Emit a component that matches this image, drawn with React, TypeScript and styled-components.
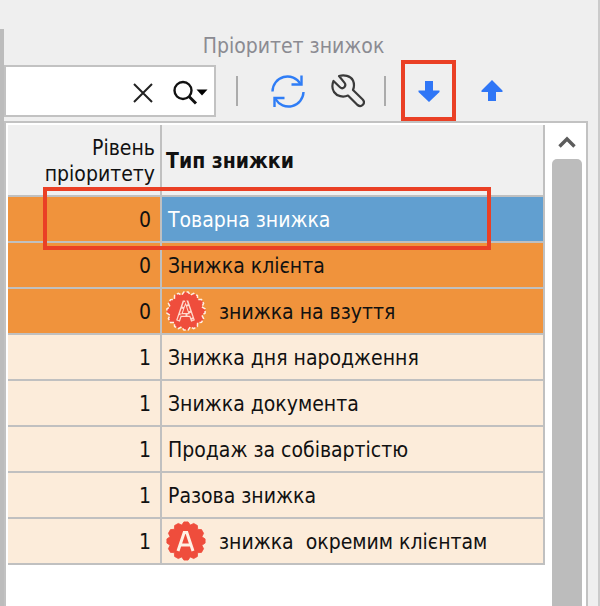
import React from "react";
import styled, { createGlobalStyle } from "styled-components";

const GlobalStyle = createGlobalStyle`
  *, *::before, *::after { box-sizing: border-box; }
  body {
    margin: 0;
    background: #efefef;
    font-family: "DejaVu Sans Condensed", "Noto Sans", sans-serif;
    font-size: 21px;
    line-height: 26px;
    color: #111;
  }
  button { font: inherit; color: inherit; }
`;

const Window = styled.div`
  display: flex;
  min-height: 100vh;
  padding: 29px 10px 0 0;
  border-right: 2px solid #cbcbcb;
`;

const Pane = styled.main`
  flex: 1;
  min-width: 0;
  display: flex;
  flex-direction: column;
  border-left: 4px solid #bcbcbc;
`;

const Title = styled.h1`
  margin: 0;
  padding: 4px 5px 0 0;
  height: 36px;
  font-size: 21px;
  font-weight: 400;
  text-align: center;
  color: #8b8b92;
`;

const Toolbar = styled.div`
  display: flex;
  align-items: flex-start;
  height: 56px;
`;

const SearchBox = styled.div`
  display: flex;
  align-items: center;
  width: 212px;
  height: 52px;
  background: #fff;
  border: 2px solid #c2c2c2;
`;

const SearchInput = styled.input`
  flex: 1;
  min-width: 0;
  height: 100%;
  padding: 0 8px;
  border: 0;
  outline: 0;
  background: transparent;
  font: inherit;
`;

const IconButton = styled.button<{ $width: number }>`
  display: flex;
  align-items: center;
  justify-content: center;
  flex: none;
  width: ${(p) => p.$width}px;
  height: 48px;
  padding: 0;
  border: 0;
  background: transparent;
`;

const SearchActions = styled.div`
  display: flex;
  gap: 6px;
  padding-top: 4px;
`;

const Tools = styled.div`
  display: flex;
  align-items: center;
  height: 52px;
  padding-left: 20px;
`;

const Separator = styled.span`
  width: 2px;
  height: 30px;
  background: #ababab;
`;

const ToolGroup = styled.div`
  display: flex;
  align-items: center;
  gap: 12px;
  padding: 0 12px 0 26px;
`;

const MoveGroup = styled.div`
  display: flex;
  align-items: center;
  padding-left: 15px;
  gap: 8px;
`;

const Marked = styled.div`
  position: relative;
  &::after {
    content: "";
    position: absolute;
    inset: -7px 0 -6px;
    border: 4px solid #ea4025;
    pointer-events: none;
  }
`;

const GridPanel = styled.section`
  flex: 1;
  display: flex;
  background: #fff;
  border: 2px solid #c2c2c2;
  border-bottom: 0;
  padding: 2px 4px 0 2px;
`;

const GridArea = styled.div`
  flex: 1;
  min-width: 0;
`;

const Table = styled.table`
  width: 100%;
  table-layout: fixed;
  border-collapse: separate;
  border-spacing: 0;
`;

const HeadCell = styled.th<{ $numeric?: boolean }>`
  width: ${(p) => (p.$numeric ? "154px" : "auto")};
  height: 72px;
  padding: ${(p) => (p.$numeric ? "2px 5px 0 0" : "2px 4px 0")};
  text-align: ${(p) => (p.$numeric ? "right" : "left")};
  font-weight: ${(p) => (p.$numeric ? 400 : 700)};
  background: #f0f0f0;
  border: solid #c0c0c0;
  border-width: 0 2px 2px 0;
`;

type Tone = "high" | "low";

const Row = styled.tr<{ $tone: Tone }>`
  background: ${(p) => (p.$tone === "high" ? "#f0933c" : "#fcecda")};
`;

const Cell = styled.td<{ $numeric?: boolean; $selected?: boolean }>`
  position: relative;
  height: 46px;
  padding: ${(p) => (p.$numeric ? "2px 9px 0 0" : "0 6px")};
  text-align: ${(p) => (p.$numeric ? "right" : "left")};
  color: ${(p) => (p.$selected ? "#fff" : "inherit")};
  background: ${(p) => (p.$selected ? "#619fd0" : "transparent")};
  border: solid #c0c0c0;
  border-width: 0 2px 2px 0;
`;

const RowMark = styled.span`
  position: absolute;
  z-index: 1;
  top: -10px;
  left: -119px;
  right: 52px;
  height: 63px;
  border: 4px solid #ea4025;
  pointer-events: none;
`;

const CellContent = styled.div`
  display: flex;
  align-items: center;
  gap: 13px;
  white-space: pre;
`;

const Name = styled.span`
  padding-top: 2px;
`;

const BadgeSlot = styled.span`
  display: flex;
  margin-left: -2px;
`;

const ScrollTrack = styled.div`
  flex: none;
  width: 30px;
  margin-left: 7px;
  display: flex;
  flex-direction: column;
`;

const ScrollUp = styled.button`
  display: flex;
  align-items: center;
  justify-content: center;
  height: 34px;
  padding: 0;
  border: 0;
  background: transparent;
`;

const ScrollThumb = styled.div`
  flex: 1;
  background: #bcbcbc;
  border-radius: 5px 5px 0 0;
`;

const badgePoints = Array.from({ length: 12 }, (_, tooth) => {
  const centre = (tooth * Math.PI) / 6;
  return [
    [-0.26, 16.5],
    [-0.11, 19.2],
    [0.11, 19.2],
  ]
    .map(
      ([offset, r]) =>
        `${(20 + r * Math.cos(centre + offset)).toFixed(1)},${(20 + r * Math.sin(centre + offset)).toFixed(1)}`,
    )
    .join(" ");
}).join(" ");

function Badge({ dashed }: { dashed?: boolean }) {
  return (
    <svg width="40" height="40" viewBox="0 0 40 40" aria-hidden="true">
      <polygon
        points={badgePoints}
        fill="#ef4d3c"
        stroke={dashed ? "#fff0e4" : "#ef4d3c"}
        strokeWidth={dashed ? 1.5 : 0.8}
        strokeDasharray={dashed ? "4 2" : undefined}
      />
      <path
        d="M12 30 L18.2 11.5 H20.8 L27 30 M14.5 24 H24.5"
        fill="none"
        stroke={dashed ? "#ffd9cc" : "#fff0e4"}
        strokeWidth={dashed ? 4 : 3}
      />
      {dashed && (
        <path
          d="M12.3 29 L19.5 9 L26.7 29 M14.5 24 H24.5"
          fill="none"
          stroke="#ef4d3c"
          strokeWidth="1.6"
          strokeDasharray="5 2"
        />
      )}
    </svg>
  );
}

function CloseIcon() {
  return (
    <svg width="20" height="20" viewBox="0 0 20 20" fill="none" stroke="#222" strokeWidth="2">
      <path d="M1 1 L19 19 M19 1 L1 19" />
    </svg>
  );
}

function SearchIcon() {
  return (
    <svg width="36" height="26" viewBox="0 0 36 26">
      <circle cx="11" cy="10.5" r="8.5" fill="none" stroke="#111" strokeWidth="2.4" />
      <path d="M17 16.5 L24 23.5" stroke="#111" strokeWidth="3" />
      <path d="M24.5 9.5 H35.5 L30 15.5 Z" fill="#000" />
    </svg>
  );
}

function RefreshIcon() {
  return (
    <svg width="34" height="34" viewBox="0 0 34 34" fill="none" stroke="#2f7df6" strokeWidth="2.4">
      <path d="M1.5 17.5 A15 15 0 0 1 29.5 10" />
      <path d="M30.5 1.5 V10.5 H20.5" />
      <path d="M32.5 18 A15 15 0 0 1 4.5 25" />
      <path d="M3.5 33 V24 H13.5" />
    </svg>
  );
}

function WrenchIcon() {
  return (
    <svg
      width="34"
      height="34"
      viewBox="0 0 34 34"
      fill="none"
      stroke="#3a3a3a"
      strokeWidth="2.2"
      strokeLinejoin="round"
      strokeLinecap="round"
    >
      <path d="M8 2 C13 .8 19.5 1.5 22 6.5 C23.3 9.5 23.2 13 22 16 L31.7 25.5 C35 29 30.5 34 26.5 31 L17 21.5 C12 23.7 6 22.3 3 18 C1 14.5 1 10.5 2.5 7 L9 13.2 C12 16 16 11.8 13.4 8.6 Z" />
    </svg>
  );
}

function ArrowIcon({ up }: { up?: boolean }) {
  return (
    <svg width="22" height="22" viewBox="0 0 22 22" fill="#2f76f6">
      {up ? (
        <path d="M11 0 L21.5 10.5 V12 H15 V21 H7 V12 H.5 V10.5 Z" />
      ) : (
        <path d="M11 22 L.5 12 V10.5 H7 V1 H15 V10.5 H21.5 V12 Z" />
      )}
    </svg>
  );
}

interface Discount {
  level: number;
  name: string;
  badge?: boolean;
  selected?: boolean;
}

const discounts: Discount[] = [
  { level: 0, name: "Товарна знижка", selected: true },
  { level: 0, name: "Знижка клієнта" },
  { level: 0, name: "знижка на взуття", badge: true },
  { level: 1, name: "Знижка дня народження" },
  { level: 1, name: "Знижка документа" },
  { level: 1, name: "Продаж за собівартістю" },
  { level: 1, name: "Разова знижка" },
  { level: 1, name: "знижка  окремим клієнтам", badge: true },
];

export default function App() {
  return (
    <>
      <GlobalStyle />
      <Window>
        <Pane>
          <Title>Пріоритет знижок</Title>
          <Toolbar>
            <SearchBox>
              <SearchInput type="text" aria-label="Пошук" />
              <SearchActions>
                <IconButton $width={34} type="button" aria-label="Очистити">
                  <CloseIcon />
                </IconButton>
                <IconButton $width={48} type="button" aria-label="Знайти">
                  <SearchIcon />
                </IconButton>
              </SearchActions>
            </SearchBox>
            <Tools>
              <Separator />
              <ToolGroup>
                <IconButton $width={48} type="button" aria-label="Оновити">
                  <RefreshIcon />
                </IconButton>
                <IconButton $width={48} type="button" aria-label="Налаштування">
                  <WrenchIcon />
                </IconButton>
              </ToolGroup>
              <Separator />
              <MoveGroup>
                <Marked>
                  <IconButton $width={55} type="button" aria-label="Перемістити вниз">
                    <ArrowIcon />
                  </IconButton>
                </Marked>
                <IconButton $width={55} type="button" aria-label="Перемістити вгору">
                  <ArrowIcon up />
                </IconButton>
              </MoveGroup>
            </Tools>
          </Toolbar>
          <GridPanel>
            <GridArea>
              <Table>
                <thead>
                  <tr>
                    <HeadCell $numeric scope="col">
                      Рівень пріоритету
                    </HeadCell>
                    <HeadCell scope="col">Тип знижки</HeadCell>
                  </tr>
                </thead>
                <tbody>
                  {discounts.map((d) => (
                    <Row key={d.name} $tone={d.level === 0 ? "high" : "low"}>
                      <Cell $numeric>{d.level}</Cell>
                      <Cell $selected={d.selected}>
                        <CellContent>
                          {d.badge && (
                            <BadgeSlot>
                              <Badge dashed={d.level === 0} />
                            </BadgeSlot>
                          )}
                          <Name>{d.name}</Name>
                        </CellContent>
                        {d.selected && <RowMark />}
                      </Cell>
                    </Row>
                  ))}
                </tbody>
              </Table>
            </GridArea>
            <ScrollTrack>
              <ScrollUp type="button" aria-label="Прокрутити вгору">
                <svg width="18" height="12" viewBox="0 0 18 12" fill="none" stroke="#5c5c5c" strokeWidth="3.4">
                  <path d="M1.5 10.5 L9 3 L16.5 10.5" />
                </svg>
              </ScrollUp>
              <ScrollThumb />
            </ScrollTrack>
          </GridPanel>
        </Pane>
      </Window>
    </>
  );
}
